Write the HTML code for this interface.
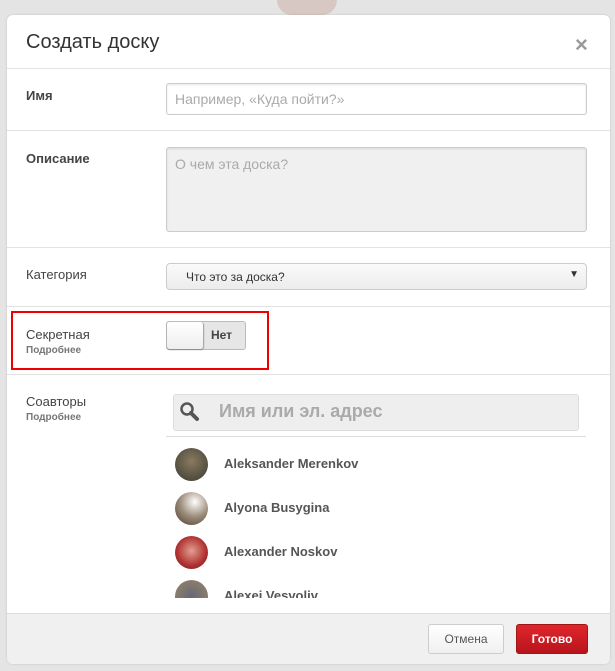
<!DOCTYPE html>
<html><head><meta charset="utf-8"><style>
body{margin:0;width:615px;height:671px;background:#e4e4e4;font-family:"Liberation Sans",Arial,sans-serif;position:relative;overflow:hidden}
.m{position:absolute;left:7px;top:15px;width:603px;height:649px;background:#fff;border-radius:6px;overflow:hidden;box-shadow:0 0 2px rgba(0,0,0,.15)}
.a{position:absolute}
.hr{position:absolute;left:0;width:603px;height:1px;background:#e2e2e2}
.lbl{position:absolute;left:19px;font-size:13px;font-weight:bold;color:#444}
.sub{position:absolute;left:19px;font-size:10px;font-weight:bold;color:#777}
.inp{position:absolute;left:159px;width:421px;border:1px solid #ccc;border-radius:3px;box-shadow:inset 0 1px 2px rgba(0,0,0,.1);font-size:14px;color:#aaa;box-sizing:border-box}
.av{position:absolute;left:168px;width:33px;height:33px;border-radius:50%}
.nm{position:absolute;left:217px;font-size:13px;font-weight:bold;color:#555}
</style></head><body>
<div class="a" style="left:277px;top:0;width:60px;height:15px;border-radius:0 0 30px 30px;background:#d8c8c4"></div>
<div class="m">
<div class="a" style="left:19px;top:16px;font-size:20px;color:#333">Создать доску</div>
<div class="a" style="left:568px;top:17px;font-size:22px;color:#999;font-weight:bold">×</div>
<div class="hr" style="top:53px"></div>
<div class="lbl" style="top:73px">Имя</div>
<div class="inp" style="top:68px;height:32px;padding:7px 8px">Например, «Куда пойти?»</div>
<div class="hr" style="top:115px"></div>
<div class="lbl" style="top:136px">Описание</div>
<div class="inp" style="top:132px;height:85px;background:#f0f0f0;padding:8px 8px">О чем эта доска?</div>
<div class="hr" style="top:232px"></div>
<div class="lbl" style="top:252px;font-weight:normal;color:#444">Категория</div>
<div class="a" style="left:159px;top:248px;width:421px;height:27px;border:1px solid #ccc;border-radius:4px;background:linear-gradient(#fafafa,#ececec);box-sizing:border-box;font-size:12px;color:#333;padding:6px 19px">Что это за доска?<span style="position:absolute;right:7px;top:5px;font-size:10px">▼</span></div>
<div class="hr" style="top:291px"></div>
<div class="a" style="left:4px;top:296px;width:258px;height:59px;border:2px solid #e00;box-sizing:border-box"></div>
<div class="lbl" style="top:312px;font-weight:normal">Секретная</div>
<div class="sub" style="top:330px">Подробнее</div>
<div class="a" style="left:159px;top:306px;width:80px;height:29px;border:1px solid #bbb;border-radius:3px;background:#e6e6e6;box-sizing:border-box"></div>
<div class="a" style="left:160px;top:307px;width:36px;height:27px;border-radius:3px;background:linear-gradient(#fff,#eee);border-right:1px solid #aaa;box-shadow:0 1px 1px #888"></div>
<div class="a" style="left:204px;top:313px;font-size:12px;font-weight:bold;color:#444">Нет</div>
<div class="hr" style="top:359px"></div>
<div class="lbl" style="top:379px;font-weight:normal">Соавторы</div>
<div class="sub" style="top:397px">Подробнее</div>
<div class="a" style="left:166px;top:379px;width:406px;height:37px;background:#eee;border:1px solid #ddd;border-radius:3px;box-sizing:border-box"></div>
<svg class="a" style="left:172px;top:386px" width="22" height="22" viewBox="0 0 22 22"><circle cx="8" cy="8" r="5.5" fill="none" stroke="#555" stroke-width="2.5"/><path d="M12 12l6 6" stroke="#555" stroke-width="4" stroke-linecap="round"/></svg>
<div class="a" style="left:212px;top:386px;font-size:18px;font-weight:bold;color:#aaa">Имя или эл. адрес</div>
<div class="a" style="left:159px;top:421px;width:420px;height:1px;background:#ddd"></div>
<div class="av" style="top:433px;background:radial-gradient(circle at 50% 40%,#8a7a60,#3a3a30)"></div>
<div class="nm" style="top:441px">Aleksander Merenkov</div>
<div class="av" style="top:477px;background:radial-gradient(circle at 60% 30%,#fff,#9a8a78 50%,#4a3a30)"></div>
<div class="nm" style="top:485px">Alyona Busygina</div>
<div class="av" style="top:521px;background:radial-gradient(circle at 50% 45%,#e0a090,#b03030 60%,#602020)"></div>
<div class="nm" style="top:529px">Alexander Noskov</div>
<div class="a" style="left:168px;top:565px;width:33px;height:18px;overflow:hidden"><div style="width:33px;height:33px;border-radius:50%;background:radial-gradient(circle,#667,#998866)"></div></div>
<div class="nm" style="top:573px;height:10px;overflow:hidden;line-height:15px">Alexei Vesvoliv</div>
<div class="a" style="left:0;top:598px;width:603px;height:51px;background:#f0f0f0;border-top:1px solid #ddd"></div>
<div class="a" style="left:421px;top:609px;width:76px;height:30px;border:1px solid #ccc;border-radius:3px;background:linear-gradient(#fff,#f0f0f0);box-sizing:border-box;font-size:12px;color:#555;text-align:center;line-height:28px">Отмена</div>
<div class="a" style="left:509px;top:609px;width:72px;height:30px;border:1px solid #a01515;border-radius:3px;background:linear-gradient(#e0262d,#b8141b);box-sizing:border-box;font-size:12px;font-weight:bold;color:#fff;text-align:center;line-height:28px">Готово</div>
</div>
</body></html>
